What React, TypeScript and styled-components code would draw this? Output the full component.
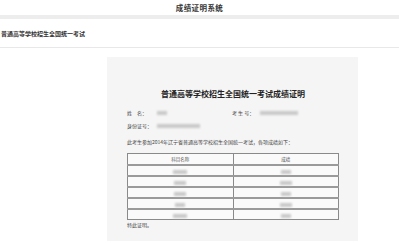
import styled, { createGlobalStyle } from "styled-components";

const GlobalStyle = createGlobalStyle`
  html, body {
    margin: 0;
    padding: 0;
    background: #ffffff;
    font-family: "Noto Sans CJK SC", "Noto Sans", sans-serif;
    color: #333;
  }
`;

const subjects = [
  { name: 14, score: 10 },
  { name: 12, score: 12 },
  { name: 12, score: 10 },
  { name: 10, score: 12 },
  { name: 14, score: 10 },
];

export default function App() {
  return (
    <>
      <GlobalStyle />
      <TopBar>成绩证明系统</TopBar>
      <Strip />
      <SubHeader>普通高等学校招生全国统一考试</SubHeader>

      <Content>
        <Card>
          <CardTitle>普通高等学校招生全国统一考试成绩证明</CardTitle>

          <InfoRow>
            <Label>姓　名：</Label>
            <Value><Blur w={10} /></Value>
            <Label>考 生 号：</Label>
            <Value><Blur w={38} /></Value>
          </InfoRow>
          <InfoRow gap={5}>
            <Label>身份证号：</Label>
            <Value><Blur w={43} /></Value>
          </InfoRow>

          <Statement>此考生参加2014年辽宁省普通高等学校招生全国统一考试，各项成绩如下：</Statement>

          <ScoreTable>
            <thead>
              <tr>
                <Th>科目名称</Th>
                <Th>成绩</Th>
              </tr>
            </thead>
            <tbody>
              {subjects.map((s, i) => (
                <tr key={i}>
                  <Td><Blur w={s.name} /></Td>
                  <Td><Blur w={s.score} /></Td>
                </tr>
              ))}
            </tbody>
          </ScoreTable>

          <Footer>特此证明。</Footer>
        </Card>
      </Content>
    </>
  );
}

const TopBar = styled.div`
  height: 15px;
  display: flex;
  align-items: center;
  justify-content: center;
  font-size: 7.5px;
  font-weight: 700;
  letter-spacing: 0.4px;
  color: #333;
`;

const Strip = styled.div`
  height: 4px;
  background: #ededed;
`;

const SubHeader = styled.div`
  height: 27px;
  display: flex;
  align-items: center;
  padding-left: 1px;
  font-size: 6px;
  font-weight: 700;
  color: #333;
  border-bottom: 1px solid #e8e8e8;
  margin-top: 1px;
`;

const Content = styled.div`
  padding-top: 9px;
`;

const Card = styled.div`
  margin-left: 107px;
  width: 251px;
  box-sizing: border-box;
  background: #f5f5f5;
  padding: 33px 19px 12px 20px;
`;

const CardTitle = styled.div`
  text-align: center;
  font-size: 8px;
  line-height: 8px;
  font-weight: 700;
  color: #222;
`;

const InfoRow = styled.div<{ gap?: number }>`
  display: grid;
  grid-template-columns: 30px 75px 28px 1fr;
  align-items: center;
  height: 8px;
  margin-top: ${(p) => (p.gap ?? 11)}px;
`;

const Label = styled.span`
  font-size: 5px;
  line-height: 8px;
  color: #444;
  white-space: nowrap;
`;

const Value = styled.span`
  display: flex;
  align-items: center;
`;

const Blur = styled.span<{ w: number }>`
  display: inline-block;
  width: ${(p) => p.w}px;
  height: 4px;
  background: #c9c9c9;
  filter: blur(0.8px);
`;

const Statement = styled.div`
  margin-top: 8px;
  font-size: 5px;
  line-height: 8px;
  color: #444;
  white-space: nowrap;
`;

const ScoreTable = styled.table`
  margin-top: 7px;
  width: 212px;
  border-collapse: collapse;
  border: 1px solid #6e6e6e;
  background: #fafafa;
`;

const Th = styled.th`
  height: 10px;
  padding: 0;
  font-size: 4.5px;
  line-height: 6px;
  font-weight: 400;
  color: #555;
  border: 1px solid #8a8a8a;
  width: 50%;
`;

const Td = styled.td`
  height: 9px;
  padding: 0;
  text-align: center;
  border: 1px solid #8a8a8a;
  border-top-width: 2px;
  border-top-color: #9a9a9a;
  line-height: 0;
`;

const Footer = styled.div`
  margin-top: 1px;
  font-size: 5px;
  line-height: 8px;
  color: #444;
`;
